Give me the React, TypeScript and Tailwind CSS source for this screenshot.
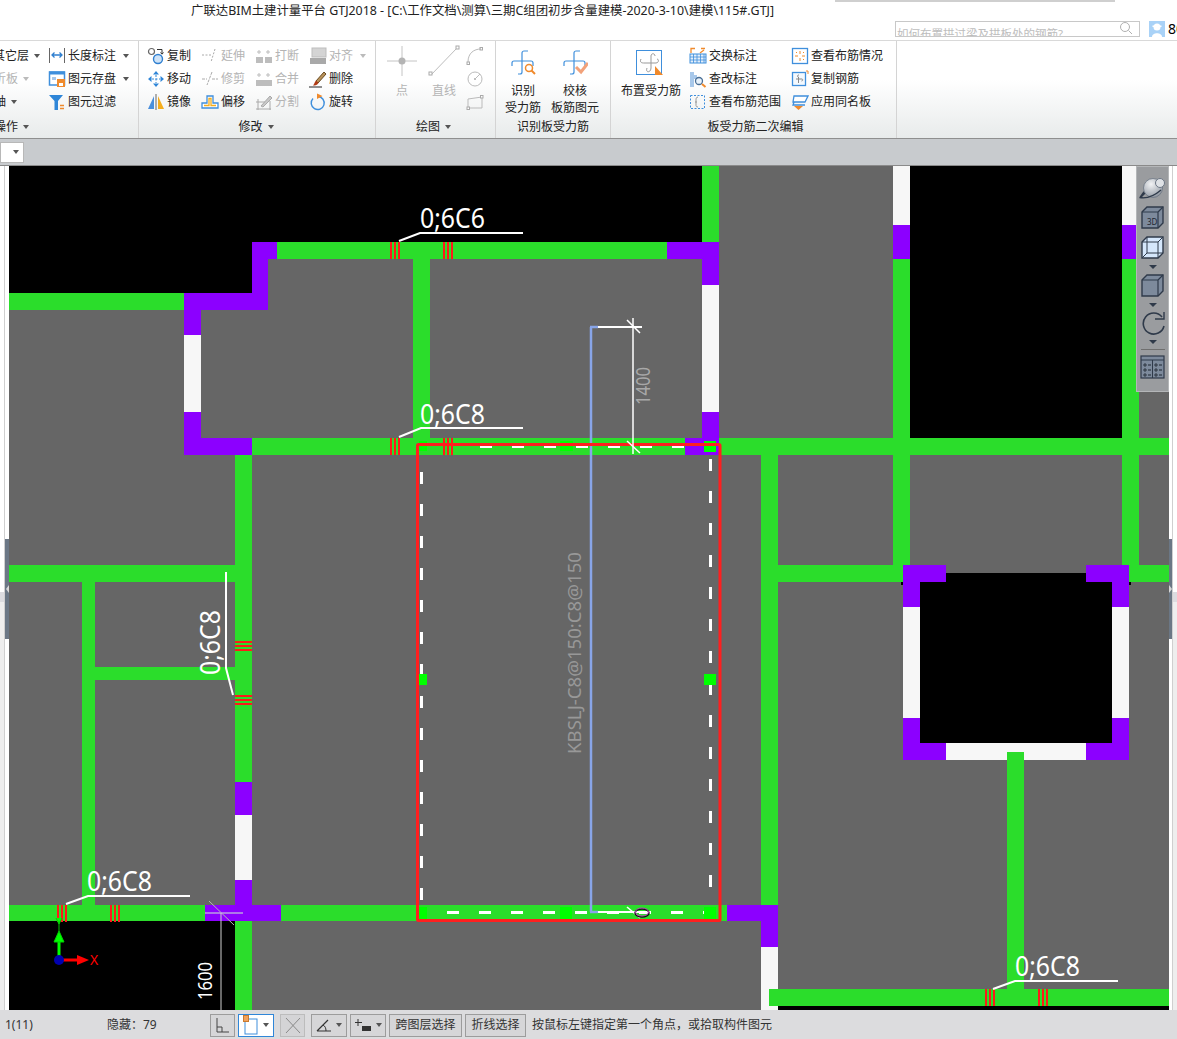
import React from 'react';

const GREEN = '#2bdd2b';
const PURPLE = '#8c00ff';
const WHITE = '#f7f7f7';
const BLACK = '#000000';

// x, y, w, h, fill in page coordinates
const blocks: [number, number, number, number, string][] = [
  // black voids
  [9, 166, 693, 76, BLACK],
  [9, 242, 243, 51, BLACK],
  [910, 166, 212, 272, BLACK],
  [920, 573, 192, 170, BLACK],
  [9, 921, 226, 89, BLACK],
  [778, 1006, 391, 4, BLACK],
  [901, 573, 2, 12, BLACK],
  [1129, 573, 2, 12, BLACK],
  // upper walls
  [252, 242, 466, 17, GREEN],
  [413, 259, 17, 179, GREEN],
  [702, 166, 17, 76, GREEN],
  [9, 293, 175, 17, GREEN],
  [252, 242, 25, 17, PURPLE],
  [252, 242, 16, 68, PURPLE],
  [184, 293, 84, 17, PURPLE],
  [184, 293, 17, 42, PURPLE],
  [184, 335, 17, 77, WHITE],
  [184, 412, 17, 43, PURPLE],
  [184, 438, 68, 17, PURPLE],
  [667, 242, 51, 17, PURPLE],
  [702, 242, 17, 43, PURPLE],
  [702, 285, 17, 127, WHITE],
  [702, 412, 17, 43, PURPLE],
  [252, 438, 917, 17, GREEN],
  [685, 438, 34, 17, PURPLE],
  // right columns
  [893, 166, 17, 59, WHITE],
  [893, 225, 17, 34, PURPLE],
  [893, 259, 17, 306, GREEN],
  [1122, 166, 17, 59, WHITE],
  [1122, 225, 17, 34, PURPLE],
  [1122, 259, 17, 306, GREEN],
  // left rooms
  [235, 455, 17, 327, GREEN],
  [235, 782, 17, 33, PURPLE],
  [235, 815, 17, 65, WHITE],
  [235, 880, 17, 41, PURPLE],
  [235, 921, 17, 89, GREEN],
  [9, 565, 226, 17, GREEN],
  [82, 582, 13, 323, GREEN],
  [95, 667, 140, 13, GREEN],
  // bottom wall
  [9, 905, 196, 16, GREEN],
  [205, 905, 76, 16, PURPLE],
  [281, 905, 446, 16, GREEN],
  [727, 905, 51, 16, PURPLE],
  [761, 455, 17, 450, GREEN],
  [761, 905, 17, 42, PURPLE],
  [761, 947, 17, 63, WHITE],
  // square opening
  [778, 565, 125, 17, GREEN],
  [1129, 565, 40, 17, GREEN],
  [903, 565, 43, 17, PURPLE],
  [903, 565, 17, 42, PURPLE],
  [903, 607, 17, 111, WHITE],
  [903, 718, 17, 42, PURPLE],
  [903, 743, 43, 17, PURPLE],
  [946, 743, 140, 17, WHITE],
  [1086, 743, 43, 17, PURPLE],
  [1112, 718, 17, 42, PURPLE],
  [1112, 607, 17, 111, WHITE],
  [1086, 565, 43, 17, PURPLE],
  [1112, 565, 17, 42, PURPLE],
  [1007, 752, 17, 237, GREEN],
  [769, 989, 400, 17, GREEN],
];

const handles: [number, number, number, number][] = [
  [419, 441, 8, 10],
  [560, 441, 13, 10],
  [704, 441, 12, 11],
  [417, 674, 10, 11],
  [704, 674, 12, 11],
  [419, 907, 8, 12],
  [560, 907, 12, 12],
  [704, 907, 12, 12],
];

// rebar tick marks: x, y, horizontal wall?
const ticksH: [number, number][] = [
  [390, 242],
  [443, 242],
  [390, 438],
  [443, 438],
  [57, 905],
  [110, 905],
  [985, 989],
  [1038, 989],
];
const ticksV: [number, number][] = [
  [235, 641],
  [235, 695],
];

const labelProps = {
  fill: '#ffffff',
  fontFamily: '"Noto Sans", sans-serif',
  fontSize: 27,
  textLength: 65,
  lengthAdjust: 'spacingAndGlyphs' as const,
};

function Drawing() {
  const bottomDash = [447, 479, 511, 543, 575, 607, 639, 671, 703];
  const topDash = [480, 512, 544, 576, 608, 640, 672];
  const leftDash = Array.from({ length: 14 }, (_, i) => 472 + i * 32);
  const rightDash = Array.from({ length: 14 }, (_, i) => 459 + i * 32);
  return (
    <svg width="1160" height="844" viewBox="9 166 1160 844" className="block shrink-0">
      <rect x="9" y="166" width="1160" height="844" fill="#666666" />
      {blocks.map(([x, y, w, h, fill], i) => (
        <rect key={i} x={x} y={y} width={w} height={h} fill={fill} />
      ))}
      {ticksH.map(([x, y], i) => (
        <g key={i} fill="#ff1a1a">
          <rect x={x} y={y} width="2" height="17" />
          <rect x={x + 4} y={y} width="2" height="17" />
          <rect x={x + 8} y={y} width="2" height="17" />
        </g>
      ))}
      {ticksV.map(([x, y], i) => (
        <g key={i} fill="#ff1a1a">
          <rect x={x} y={y} width="17" height="2" />
          <rect x={x} y={y + 4} width="17" height="2" />
          <rect x={x} y={y + 8} width="17" height="2" />
        </g>
      ))}

      {/* bar annotations */}
      <g stroke="#ffffff" strokeWidth="2" fill="none">
        <path d="M399 241 L420 233 H523" />
        <path d="M399 437 L421 428 H523" />
        <path d="M226 572 V668 L233 695" />
        <path d="M66 904 L88 896 H190" />
        <path d="M993 989 L1015 981 H1118" />
      </g>
      <text x="420" y="228" {...labelProps}>0;6C6</text>
      <text x="420" y="424" {...labelProps}>0;6C8</text>
      <text x="87" y="891" {...labelProps}>0;6C8</text>
      <text x="1015" y="976" {...labelProps}>0;6C8</text>
      <text transform="translate(220 675) rotate(-90)" {...labelProps}>0;6C8</text>

      {/* selected slab region */}
      <g fill="#ffffff">
        {bottomDash.map((x) => <rect key={x} x={x} y="911" width="12" height="3" />)}
        {topDash.map((x) => <rect key={x} x={x} y="446" width="12" height="2" />)}
        {leftDash.map((y) => <rect key={y} x="420" y={y} width="3" height="12" />)}
        {rightDash.map((y) => <rect key={y} x="709" y={y} width="3" height="12" />)}
      </g>
      {handles.map(([x, y, w, h], i) => (
        <rect key={i} x={x} y={y} width={w} height={h} fill="#00ff00" />
      ))}
      <path d="M591 912 V327" stroke="#88a5e8" strokeWidth="2.5" fill="none" />
      <path d="M590 327 H598 M590 912 H598" stroke="#88a5e8" strokeWidth="2.5" />
      <rect x="417.5" y="444.5" width="302.5" height="476" fill="none" stroke="#ff1f1f" strokeWidth="3" rx="1" />
      <g stroke="#ffffff" fill="none">
        <path d="M598 327 H642" strokeWidth="2" />
        <path d="M633 318 V454" strokeWidth="1.5" />
        <path d="M627 320 L640 333 M627 441 L640 453" strokeWidth="1.5" />
        <path d="M598 912 H640" strokeWidth="2" />
        <path d="M627 907 L640 918" strokeWidth="1.5" />
      </g>
      <ellipse cx="642" cy="913" rx="7" ry="4" fill="none" stroke="#111111" strokeWidth="1.5" />
      <ellipse cx="642" cy="912" rx="6.5" ry="4" fill="none" stroke="#c040c0" strokeWidth="1" />

      <text
        transform="translate(650 405) rotate(-90)"
        fill="#a8a8a8"
        fontFamily='"Noto Sans", sans-serif'
        fontSize="20"
        textLength="38"
        lengthAdjust="spacingAndGlyphs"
      >
        1400
      </text>
      <text
        transform="translate(581 754) rotate(-90)"
        fill="#989898"
        fontFamily='"Noto Sans", sans-serif'
        fontSize="18"
        textLength="202"
        lengthAdjust="spacingAndGlyphs"
      >
        KBSLJ-C8@150:C8@150
      </text>
      <text
        transform="translate(212 1000) rotate(-90)"
        fill="#ffffff"
        fontFamily='"Noto Sans", sans-serif'
        fontSize="20"
        textLength="38"
        lengthAdjust="spacingAndGlyphs"
      >
        1600
      </text>

      {/* wall end ticks */}
      <path d="M209 901 L234 925" stroke="#b5b5b5" strokeWidth="1" />
      <path d="M205 913 H243" stroke="#b9a0e0" strokeWidth="1.5" />
      <path d="M221 913 V1010" stroke="#d0d0d0" strokeWidth="1" />

      {/* UCS axes */}
      <path d="M59 960 V940" stroke="#00ff00" strokeWidth="3" />
      <path d="M59 931 L64 942 H54 Z M59 931 V921 M56 918 L59 924 L62 918" fill="#00ff00" stroke="#00d000" strokeWidth="1" />
      <path d="M60 960 H80" stroke="#ff0000" strokeWidth="3" />
      <path d="M89 960 L77 955 V965 Z" fill="#ff0000" />
      <circle cx="59" cy="960" r="5" fill="#0000b0" />
      <text x="90" y="965" fill="#ff0000" fontFamily='"Noto Sans", sans-serif' fontSize="14">X</text>
    </svg>
  );
}

function Sm({ children }: { children: React.ReactNode }) {
  return (
    <svg width="18" height="18" viewBox="0 0 18 18" fill="none" className="shrink-0">
      {children}
    </svg>
  );
}

const icons: Record<string, React.ReactNode> = {
  length: (
    <>
      <path d="M1.5 1 V16 M16.5 1 V16" stroke="#666" />
      <path d="M4 8 H14 M6.5 5.5 L4 8 L6.5 10.5 M11.5 5.5 L14 8 L11.5 10.5" stroke="#2f7fd0" strokeWidth="1.3" />
    </>
  ),
  save: (
    <>
      <rect x="1.5" y="2" width="15" height="13" stroke="#3f8fdc" strokeWidth="1.5" fill="#fff" />
      <rect x="1" y="1.5" width="16" height="3" fill="#3f8fdc" />
      <rect x="4" y="7" width="4" height="3" fill="#a8c8ea" />
      <rect x="9" y="9" width="8" height="8" fill="#f08a2c" />
      <rect x="11" y="13" width="4" height="3" fill="#fff" />
    </>
  ),
  filter: (
    <>
      <path d="M1 2 H15 L10 8 V17 H6.5 V8 Z" fill="#2f86d8" />
      <path d="M12 12.5 H16 M12 15.5 H16" stroke="#f08a2c" strokeWidth="1.3" />
    </>
  ),
  copy: (
    <>
      <circle cx="4.5" cy="4.5" r="3" stroke="#666" strokeWidth="1.2" />
      <circle cx="11" cy="12" r="4.5" fill="#cfe3f7" stroke="#2f7fd0" strokeWidth="1.4" />
      <path d="M10 2.5 H15 V7 M13.5 5.5 L15 7.2 L16.5 5.5" stroke="#333" />
    </>
  ),
  move: (
    <>
      <path d="M9 1 L12 4.5 H6 Z M9 17 L12 13.5 H6 Z M1 9 L4.5 6 V12 Z M17 9 L13.5 6 V12 Z" fill="#2f86d8" />
      <path d="M5 9 H13 M9 5 V13" stroke="#2f86d8" strokeDasharray="2 1.5" />
    </>
  ),
  mirror: (
    <>
      <path d="M7 3 V16 H1 Z" fill="#4a8fdc" />
      <path d="M9 1 V17" stroke="#666" />
      <path d="M11 3 V16 H17 Z" fill="#f5ad1c" />
    </>
  ),
  offset: (
    <>
      <path d="M1 15 V10 H6 V3 H12 V10 H17 V15 Z" stroke="#3f8fdc" strokeWidth="1.3" fill="#fff" />
      <path d="M3 12.5 H8 V5.5 H10 V12.5 H15" stroke="#f5ad1c" strokeWidth="1.3" />
    </>
  ),
  extend: <path d="M1 8 H10 M14 2 L10 15" stroke="#aaa" strokeDasharray="2 1.5" />,
  trim: <path d="M1 9 H6 M11 9 H17 M11 2 L6 15" stroke="#aaa" strokeDasharray="3 1" />,
  break: (
    <>
      <rect x="1" y="10" width="7" height="6" fill="#bdbdbd" />
      <rect x="10" y="10" width="7" height="6" fill="#bdbdbd" />
      <path d="M4 3 V7 M2 5 H6 M13 3 V7 M11 5 H15" stroke="#bdbdbd" />
    </>
  ),
  merge: (
    <>
      <rect x="1" y="10" width="16" height="6" fill="#bdbdbd" />
      <path d="M4 3 V7 M2 5 H6 M13 3 V7 M11 5 H15" stroke="#bdbdbd" />
    </>
  ),
  split: (
    <>
      <path d="M1 9 H10 M1 16 H16 M3 6 V17 M15 8 V17" stroke="#aaa" />
      <path d="M6 13 L15 3 L17 5 L8 14 Z" fill="#c8c8c8" stroke="#aaa" />
    </>
  ),
  align: (
    <>
      <rect x="3" y="1" width="14" height="9" fill="#d4d4d4" stroke="#bdbdbd" />
      <rect x="1" y="11" width="16" height="6" fill="#a9a9a9" />
    </>
  ),
  delete: (
    <>
      <path d="M7 11 L15 2 L17 4 L9 13 Z" fill="#b8925a" stroke="#6a4a20" />
      <path d="M7 10.5 L9.5 13 C8 15.5 5.5 15.5 4 15.5 C5.5 14 5.5 12 7 10.5 Z" fill="#b03a14" />
      <path d="M0 17 H13" stroke="#222" />
    </>
  ),
  rotate: (
    <>
      <path d="M9 3.5 A6.5 6.5 0 1 1 4 5.5" stroke="#3f8fdc" strokeWidth="1.4" />
      <path d="M8 0.5 L13.5 3 L8 6 Z" fill="#f08a2c" />
    </>
  ),
  swap: (
    <>
      <path d="M2 6 V1.5 H6 M11 6 L15 3 M12 1.5 H16" stroke="#f08a2c" strokeWidth="1.3" />
      <rect x="1" y="7" width="16" height="9" stroke="#3f8fdc" fill="#e4effa" />
      <path d="M1 10 H17 M1 13 H17 M4.5 7 V16 M8 7 V16 M11.5 7 V16 M15 7 V16" stroke="#3f8fdc" strokeWidth="0.8" />
    </>
  ),
  edit: (
    <>
      <path d="M1 2 H5 V5 H8 V9 H5 V17 H1 Z" fill="#a8c8ea" />
      <circle cx="10" cy="11" r="3.5" stroke="#4a6f96" strokeWidth="1.3" fill="#e8f2fb" />
      <path d="M13 14 L16.5 17" stroke="#f08a2c" strokeWidth="2" />
    </>
  ),
  range: (
    <>
      <rect x="1.5" y="2.5" width="14" height="13" stroke="#3f8fdc" strokeDasharray="2 1.5" />
      <path d="M9 4 C7 4 7 6 7 7 V12 C7 13 7 14 9 14 M6 9 H8" stroke="#999" />
    </>
  ),
  view: (
    <>
      <rect x="1.5" y="1.5" width="15" height="15" stroke="#3f8fdc" strokeWidth="1.3" fill="#fff" />
      <path d="M9 4 V7 M9 11 V14 M4 9 H7 M11 9 H14 M5 5 L6 6 M12 12 L13 13 M13 5 L12 6" stroke="#f08a2c" />
    </>
  ),
  copyBar: (
    <>
      <rect x="1.5" y="2.5" width="13" height="13" stroke="#3f8fdc" strokeWidth="1.3" fill="#f4f9fe" />
      <path d="M15 1 H17 V4" stroke="#f08a2c" />
      <path d="M8 5 C6 5 6 7 7.5 7 V13 M5 9 H11 C12 9 12 11 10.5 11" stroke="#888" fill="none" />
    </>
  ),
  apply: (
    <>
      <path d="M3 3 H17 L14 9 H2 Z" stroke="#3f8fdc" strokeWidth="1.3" fill="#fff" />
      <path d="M3 9 L2 12 H14" stroke="#3f8fdc" strokeWidth="1.3" />
      <path d="M3 13 H12 L7.5 17 Z" fill="#f08a2c" />
    </>
  ),
};

function Item({ icon, label, off, arrow }: { icon: string; label: string; off?: boolean; arrow?: boolean }) {
  return (
    <div className="flex h-[23px] items-center gap-[2px]">
      <Sm>{icons[icon]}</Sm>
      <span className={`whitespace-nowrap ${off ? 'text-[#b4b4b4]' : 'text-[#222]'}`}>{label}</span>
      {arrow && <Caret off={off} />}
    </div>
  );
}

function Caret({ off }: { off?: boolean }) {
  return (
    <span
      className={`ml-[5px] h-0 w-0 border-x-[3.5px] border-t-[4px] border-x-transparent ${off ? 'border-t-[#bbb]' : 'border-t-[#555]'}`}
    />
  );
}

function BarCross({ mark }: { mark: 'search' | 'check' }) {
  return (
    <svg width="26" height="26" viewBox="0 0 26 26" fill="none">
      <path d="M8 25 H10 C11 25 12 24 12 23 V4 C12 3 13 2 14 2 H18" stroke="#3f8fdc" strokeWidth="1.2" />
      <path d="M2 17 V14 C2 13 3 12 4 12 H21 C22 12 23 13 23 14 V17" stroke="#3f8fdc" strokeWidth="1.2" />
      {mark === 'search' ? (
        <>
          <circle cx="19" cy="19" r="3.5" stroke="#f08a2c" strokeWidth="1.5" fill="#fff" />
          <path d="M21.5 21.5 L25 25" stroke="#f08a2c" strokeWidth="2" />
        </>
      ) : (
        <path d="M14 18 L19 23 L26 14" stroke="#f2a27a" strokeWidth="3" />
      )}
    </svg>
  );
}

function Ribbon() {
  return (
    <div className="flex h-[99px] shrink-0 overflow-hidden border-t border-b border-t-[#d9d9d9] border-b-[#8f8f8f] bg-linear-to-b from-white from-40% to-[#e8ebeb] text-[12px] leading-none">
      {/* 选择 / 通用操作 */}
      <div className="flex w-[139px] shrink-0 flex-col border-r border-[#d4d4d4] pt-[3px]">
        <div className="flex h-[72px]">
          <div className="flex w-[48px] shrink-0 flex-col">
            <div className="-ml-[7px] flex h-[23px] items-center text-[#222]">其它层<Caret /></div>
            <div className="-ml-[6px] flex h-[23px] items-center text-[#b4b4b4]">折板<Caret off /></div>
            <div className="-ml-[6px] flex h-[23px] items-center text-[#222]">轴<Caret /></div>
          </div>
          <div className="flex flex-col">
            <Item icon="length" label="长度标注" arrow />
            <Item icon="save" label="图元存盘" arrow />
            <Item icon="filter" label="图元过滤" />
          </div>
        </div>
        <div className="-ml-[6px] flex flex-1 items-center text-[#222]">操作<Caret /></div>
      </div>

      {/* 修改 */}
      <div className="flex w-[237px] shrink-0 flex-col border-r border-[#d4d4d4] pt-[3px] pl-[8px]">
        <div className="flex h-[72px]">
          {[
            [['copy', '复制'], ['move', '移动'], ['mirror', '镜像']],
            [['extend', '延伸', 1], ['trim', '修剪', 1], ['offset', '偏移']],
            [['break', '打断', 1], ['merge', '合并', 1], ['split', '分割', 1]],
          ].map((col, i) => (
            <div key={i} className="flex w-[54px] flex-col">
              {col.map(([ic, t, off]) => (
                <Item key={t as string} icon={ic as string} label={t as string} off={!!off} />
              ))}
            </div>
          ))}
          <div className="flex flex-col">
            <Item icon="align" label="对齐" off arrow />
            <Item icon="delete" label="删除" />
            <Item icon="rotate" label="旋转" />
          </div>
        </div>
        <div className="flex flex-1 items-center justify-center pr-[10px] text-[#222]">修改<Caret /></div>
      </div>

      {/* 绘图 */}
      <div className="flex w-[120px] shrink-0 flex-col border-r border-[#d4d4d4] pt-[4px]">
        <div className="flex h-[71px]">
          <div className="flex w-[50px] flex-col items-center pl-[2px]">
            <svg width="32" height="32" viewBox="0 0 32 32" fill="none">
              <path d="M16 1 V31 M1 16 H31" stroke="#c4c4c4" />
              <circle cx="16" cy="16" r="3.5" fill="#b4b4b4" />
            </svg>
            <span className="mt-[8px] text-[#b4b4b4]">点</span>
          </div>
          <div className="flex w-[36px] flex-col items-center">
            <svg width="32" height="32" viewBox="0 0 32 32" fill="none">
              <path d="M3 30 L29 3" stroke="#bdbdbd" />
              <rect x="1" y="27" width="3" height="3" stroke="#aaa" fill="#fff" />
              <rect x="28" y="1" width="3" height="3" stroke="#aaa" fill="#fff" />
            </svg>
            <span className="mt-[8px] text-[#b4b4b4]">直线</span>
          </div>
          <div className="ml-[4px] flex flex-col gap-[1px]">
            <svg width="18" height="22" viewBox="0 0 18 22" fill="none">
              <path d="M2 17 C2 8 8 4 15 4" stroke="#bbb" />
              <rect x="14" y="2.5" width="2.5" height="2.5" stroke="#aaa" />
              <rect x="1" y="17" width="2.5" height="2.5" stroke="#aaa" />
            </svg>
            <svg width="18" height="22" viewBox="0 0 18 22" fill="none">
              <circle cx="9" cy="11" r="7" stroke="#bbb" />
              <circle cx="9" cy="11" r="1" fill="#aaa" />
              <path d="M9 11 L14 6" stroke="#bbb" />
            </svg>
            <svg width="18" height="22" viewBox="0 0 18 22" fill="none">
              <path d="M2 8 L16 6 V17 H2 Z" stroke="#bbb" />
              <rect x="14.5" y="4.5" width="2.5" height="2.5" stroke="#aaa" fill="#fff" />
              <rect x="1" y="16" width="2.5" height="2.5" stroke="#aaa" fill="#fff" />
            </svg>
          </div>
        </div>
        <div className="flex flex-1 items-center justify-center pr-[4px] text-[#222]">绘图<Caret /></div>
      </div>

      {/* 识别板受力筋 */}
      <div className="flex w-[115px] shrink-0 flex-col border-r border-[#d4d4d4] pt-[8px]">
        <div className="flex h-[67px] justify-center pr-[8px] text-center text-[#222]">
          <div className="flex w-[52px] flex-col items-center">
            <BarCross mark="search" />
            <span className="mt-[10px]">识别</span>
            <span className="mt-[5px]">受力筋</span>
          </div>
          <div className="flex w-[52px] flex-col items-center">
            <BarCross mark="check" />
            <span className="mt-[10px]">校核</span>
            <span className="mt-[5px] whitespace-nowrap">板筋图元</span>
          </div>
        </div>
        <div className="flex flex-1 items-center justify-center text-[#222]">识别板受力筋</div>
      </div>

      {/* 板受力筋二次编辑 */}
      <div className="flex w-[286px] shrink-0 flex-col border-r border-[#d4d4d4] pt-[3px]">
        <div className="flex h-[72px]">
          <div className="flex w-[78px] flex-col items-center pt-[5px] pl-[2px] text-[#222]">
            <svg width="30" height="28" viewBox="0 0 30 28" fill="none" className="-ml-[2px]">
              <rect x="1.5" y="1.5" width="25" height="24" stroke="#3f8fdc" fill="#fff" />
              <path d="M12 19 C10 24 16 24 16 19 V7 C16 4 20 4 20 7 M6 10 C4 14 8 14 9 14 H21 C24 14 24 10 22 10" stroke="#999" />
              <path d="M20 17 L28 26 H20 Z" fill="#f08a2c" />
            </svg>
            <span className="mt-[8px] whitespace-nowrap">布置受力筋</span>
          </div>
          <div className="flex w-[102px] flex-col">
            <Item icon="swap" label="交换标注" />
            <Item icon="edit" label="查改标注" />
            <Item icon="range" label="查看布筋范围" />
          </div>
          <div className="flex flex-col">
            <Item icon="view" label="查看布筋情况" />
            <Item icon="copyBar" label="复制钢筋" />
            <Item icon="apply" label="应用同名板" />
          </div>
        </div>
        <div className="flex flex-1 items-center justify-center pl-[4px] text-[#222]">板受力筋二次编辑</div>
      </div>
    </div>
  );
}

function NavPanel() {
  const cube = (
    <>
      <path d="M2 7 L7 2 H23 V18 L18 23 H2 Z" fill="#7d8a9c" stroke="#2f3a4a" strokeWidth="1.4" />
      <path d="M2 7 H18 V23 M18 7 L23 2" stroke="#2f3a4a" strokeWidth="1.2" />
    </>
  );
  const tri = <span className="h-0 w-0 border-x-[4px] border-t-[4px] border-x-transparent border-t-[#2f3a4a]" />;
  return (
    <div className="absolute top-0 right-[8px] flex h-[226px] w-[33px] flex-col items-center border border-[#b4b6b8] bg-[#9a9c9f] pt-[10px]">
      <svg width="28" height="22" viewBox="0 0 28 22" fill="none">
        <defs>
          <radialGradient id="ball" cx="0.4" cy="0.3" r="0.8">
            <stop offset="0" stopColor="#f2f3f5" />
            <stop offset="0.7" stopColor="#aab0b8" />
            <stop offset="1" stopColor="#767e8a" />
          </radialGradient>
        </defs>
        <path d="M0.5 20.5 C6 21.5 14 20 22 13 L19 16 C12 21 5 21 3 20 L15 8 L12 8 C6 12 2 17 0.5 20.5 Z" fill="#2f3a4a" />
        <circle cx="14" cy="11" r="9.5" fill="url(#ball)" stroke="#6c7684" strokeWidth="0.8" />
        <path d="M0.5 20.5 C6 21.5 14 20 22 13" stroke="#2f3a4a" strokeWidth="1.3" />
        <circle cx="21" cy="6" r="4.5" fill="#dfe2e6" stroke="#6c7684" />
      </svg>
      <svg width="25" height="25" viewBox="0 0 25 25" fill="none" className="mt-[6px]">
        {cube}
        <text x="7" y="20" fill="#1e2630" fontFamily='"Noto Sans", sans-serif' fontSize="8">3D</text>
      </svg>
      <svg width="25" height="25" viewBox="0 0 25 25" fill="none" className="mt-[5px]">
        <path d="M2 7 L7 2 H23 V18 L18 23 H2 Z" fill="#d5e7fb" stroke="#2f3a4a" strokeWidth="1.4" />
        <path d="M2 7 H18 V23 M18 7 L23 2 M7 2 V18 H23 M7 18 L2 23" stroke="#2f3a4a" strokeWidth="1" />
      </svg>
      <span className="mt-[5px] flex">{tri}</span>
      <svg width="25" height="25" viewBox="0 0 25 25" fill="none" className="mt-[4px]">
        {cube}
      </svg>
      <span className="mt-[5px] flex">{tri}</span>
      <svg width="26" height="26" viewBox="0 0 26 26" fill="none" className="mt-[3px]">
        <path d="M22 7 A10.5 10.5 0 1 0 24 16" stroke="#2f3a4a" strokeWidth="1.6" />
        <path d="M15 9 H24 V2" stroke="#2f3a4a" strokeWidth="1.4" />
      </svg>
      <span className="mt-[4px] flex">{tri}</span>
      <div className="mt-[5px] h-[1px] w-[24px] bg-[#6f6f6f]" />
      <svg width="25" height="24" viewBox="0 0 25 24" fill="none" className="mt-[5px]">
        <rect x="1" y="1" width="23" height="22" fill="#7d8a9c" stroke="#2f3a4a" strokeWidth="1.2" />
        <path d="M1 5 H24 M12.5 5 V23" stroke="#2f3a4a" />
        <path d="M4 9 H6 V11 H4 Z M4 14 H6 V16 H4 Z M4 19 H6 V21 H4 Z M15 9 H17 V11 H15 Z M15 14 H17 V16 H15 Z M15 19 H17 V21 H15 Z" stroke="#1e2630" strokeWidth="0.8" />
        <path d="M8 10 H11 M8 15 H11 M8 20 H11 M19 10 H22 M19 15 H22 M19 20 H22" stroke="#1e2630" />
      </svg>
    </div>
  );
}

function ToolBtn({ children, w, active, off }: { children: React.ReactNode; w: string; active?: boolean; off?: boolean }) {
  return (
    <div
      className={`flex h-[23px] items-center justify-center border ${w} ${
        active ? 'border-[#2f86d8] bg-white' : off ? 'border-[#bcbcbc] bg-[#d4d4d6]' : 'border-[#9c9c9c] bg-[#d6d6d8]'
      }`}
    >
      {children}
    </div>
  );
}

function StatusBar() {
  const tri = <span className="ml-[4px] h-0 w-0 border-x-[3px] border-t-[4px] border-x-transparent border-t-[#555]" />;
  return (
    <div className="flex h-[29px] shrink-0 items-center bg-[#dcdcde] pt-[1px] text-[12px] text-[#333]">
      <span className="ml-[5px] w-[102px]">1(11)</span>
      <span className="w-[103px]">隐藏：79</span>
      <div className="flex items-center">
        <ToolBtn w="w-[25px]">
          <svg width="15" height="17" viewBox="0 0 15 17" fill="none">
            <path d="M2 1 V15 H14 M2 10 H7 V15" stroke="#444" />
          </svg>
        </ToolBtn>
        <div className="ml-[3px]">
          <ToolBtn w="w-[36px]" active>
            <svg width="16" height="20" viewBox="0 0 16 20" fill="none">
              <rect x="2" y="4" width="12" height="15" stroke="#3f8fdc" />
              <rect x="0.5" y="0.5" width="5" height="6" fill="#f2a25c" stroke="#c87a30" />
            </svg>
            {tri}
          </ToolBtn>
        </div>
        <div className="ml-[6px]">
          <ToolBtn w="w-[25px]" off>
            <svg width="16" height="17" viewBox="0 0 16 17" fill="none">
              <path d="M1 1 L15 16 M15 1 L1 16" stroke="#8a8a8a" />
            </svg>
          </ToolBtn>
        </div>
        <div className="ml-[6px]">
          <ToolBtn w="w-[36px]">
            <svg width="16" height="15" viewBox="0 0 16 15" fill="none">
              <path d="M1 13 H15 M1 13 L12 2" stroke="#333" strokeWidth="1.2" />
              <path d="M7 7 C9 8 10 10 10 13" stroke="#333" />
            </svg>
            {tri}
          </ToolBtn>
        </div>
        <div className="ml-[3px]">
          <ToolBtn w="w-[36px]">
            <svg width="18" height="15" viewBox="0 0 18 15" fill="none">
              <path d="M4 1 V8 M1 4.5 H8" stroke="#333" />
              <rect x="8" y="8" width="9" height="5" fill="#333" />
            </svg>
            {tri}
          </ToolBtn>
        </div>
        <div className="ml-[3px]">
          <ToolBtn w="w-[73px]">跨图层选择</ToolBtn>
        </div>
        <div className="ml-[3px]">
          <ToolBtn w="w-[61px]">折线选择</ToolBtn>
        </div>
      </div>
      <span className="ml-[6px] whitespace-nowrap">按鼠标左键指定第一个角点，或拾取构件图元</span>
    </div>
  );
}

export default function App() {
  return (
    <div className="flex h-[1039px] w-[1177px] flex-col overflow-hidden bg-white font-['Noto_Sans','Noto_Sans_CJK_SC',sans-serif]">
      {/* title bar */}
      <div className="flex h-[40px] shrink-0 flex-col">
        <div className="ml-[835px] h-[2px] w-[280px] shrink-0 bg-[#cfcfcf]" />
        <div className="flex">
          <div className="mt-[1px] h-[18px] pl-[191px] text-[12.4px] leading-[16px] whitespace-nowrap text-[#222]">
            广联达BIM土建计量平台 GTJ2018 - [C:\工作文档\测算\三期C组团初步含量建模-2020-3-10\建模\115#.GTJ]
          </div>
        </div>
        <div className="ml-[895px] flex items-center">
          <div className="flex h-[16px] w-[245px] shrink-0 items-end overflow-hidden border border-[#c8c8c8] pl-[1px] text-[11.5px] leading-[15px] whitespace-nowrap text-[#bdbdbd]">
            <span className="flex-1 translate-y-[5px]">如何布置拱过梁及拱板处的钢筋?</span>
            <svg width="14" height="14" viewBox="0 0 14 14" fill="none" className="mr-[6px] mb-[1px]">
              <circle cx="6" cy="6" r="4.5" stroke="#b0b0b0" />
              <path d="M9.5 9.5 L13 13" stroke="#b0b0b0" />
            </svg>
          </div>
          <svg width="16" height="16" viewBox="0 0 16 16" className="ml-[9px] shrink-0">
            <rect width="16" height="16" fill="#a9d2f7" />
            <circle cx="8" cy="6" r="3.5" fill="#fff" />
            <rect x="3.5" y="4.5" width="9" height="1.5" fill="#fff" />
            <path d="M3 16 C3 11 13 11 13 16 Z" fill="#fff" />
          </svg>
          <span className="ml-[3px] shrink-0 text-[14px] leading-none text-black">80</span>
        </div>
      </div>

      <Ribbon />

      {/* drawing toolbar */}
      <div className="flex h-[27px] shrink-0 items-center border-b border-[#8a8a8a] bg-[#c8cbce]">
        <div className="flex h-[21px] w-[24px] items-center justify-end border border-[#b8b8b8] bg-white pr-[4px]">
          <span className="h-0 w-0 border-x-[3px] border-t-[4px] border-x-transparent border-t-[#555]" />
        </div>
      </div>

      {/* canvas */}
      <div className="relative flex h-[844px] shrink-0">
        <div className="flex w-[9px] shrink-0">
          <div className="flex w-[5px] flex-col border-r border-[#cfcfcf] bg-white">
            <div className="mt-[426px] h-[10px] bg-[#dcdce0]" />
            <div className="flex-1 bg-[#eeeeee]" />
          </div>
          <div className="flex w-[4px] flex-col bg-white">
            <div className="mt-[373px] flex h-[100px] items-center justify-end bg-[#6b7785]">
              <span className="h-0 w-0 border-y-[4px] border-r-[3px] border-y-transparent border-r-[#d8d8d8]" />
            </div>
          </div>
        </div>
        <Drawing />
        <div className="flex w-[8px] shrink-0 bg-white">
          <div className="flex w-[3px] flex-col">
            <div className="mt-[373px] flex h-[100px] items-center bg-[#6b7785]">
              <span className="h-0 w-0 border-y-[4px] border-l-[3px] border-y-transparent border-l-[#d8d8d8]" />
            </div>
          </div>
          <div className="flex flex-1 flex-col border-l border-[#cfcfcf]">
            <div className="mt-[426px] h-[10px] bg-[#dcdce0]" />
            <div className="flex-1 bg-[#eeeeee]" />
          </div>
        </div>
        <NavPanel />
      </div>

      <StatusBar />
    </div>
  );
}
